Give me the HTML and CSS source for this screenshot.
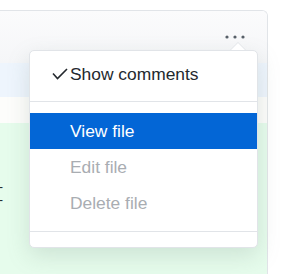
FILE: index.html
```html
<!DOCTYPE html>
<html>
<head>
<meta charset="utf-8">
<link rel="stylesheet" href="styles.css">
</head>
<body>
<div class="page">
  <div class="card">
    <div class="card-header">
      <button class="more" aria-label="More options">
        <svg width="20" height="4" viewBox="0 0 20 4"><circle cx="2" cy="2" r="1.6"/><circle cx="10" cy="2" r="1.6"/><circle cx="18" cy="2" r="1.6"/></svg>
      </button>
    </div>
    <div class="band band-blue"></div>
    <div class="band band-white"></div>
    <div class="band band-green">
      <div class="code">
        <div class="code-line"><span class="cut">-</span></div>
        <div class="code-line"><span class="cut">-</span></div>
      </div>
    </div>
  </div>
  <div class="menu">
    <div class="item item-checked">
      <svg class="check" width="16" height="12" viewBox="0 0 16 12"><polyline points="1,5.5 5.5,10.5 15,1" /></svg>
      <span>Show comments</span>
    </div>
    <div class="divider divider-top"></div>
    <div class="item item-active">View file</div>
    <div class="item item-disabled">Edit file</div>
    <div class="item item-disabled">Delete file</div>
    <div class="divider divider-bottom"></div>
  </div>
</div>
</body>
</html>
```
FILE: styles.css
```css
html, body {
  margin: 0;
  padding: 0;
  background: #ffffff;
}
body {
  font-family: "Liberation Sans", Arial, sans-serif;
  width: 298px;
  height: 274px;
  overflow: hidden;
}
.page {
  position: relative;
  padding-top: 10px;
}
.card {
  width: 268px;
  box-sizing: border-box;
  border-top: 1px solid #e1e4e8;
  border-right: 1px solid #e1e4e8;
  border-top-right-radius: 6px;
  overflow: hidden;
  background: #fff;
}
.card-header {
  height: 52px;
  background: linear-gradient(#fbfbfc, #f5f6f8);
  display: flex;
  justify-content: flex-end;
  align-items: flex-start;
  padding-top: 24px;
  padding-right: 22px;
  box-sizing: border-box;
}
.more {
  border: 0;
  padding: 0;
  margin: 0;
  background: transparent;
  display: flex;
  line-height: 0;
}
.more svg {
  fill: #586069;
}
.band-blue {
  height: 34px;
  background: #eef5fd;
}
.band-white {
  height: 26px;
  background: #fdfdfb;
}
.band-green {
  height: 160px;
  background: #e6fcec;
}
.code {
  padding-top: 58px;
  font-size: 12px;
  line-height: 13px;
  color: #24292e;
}
.code-line {
  height: 13px;
}
.cut {
  display: inline-block;
  margin-left: -1px;
}
.menu {
  position: absolute;
  top: 50px;
  left: 29px;
  width: 229px;
  box-sizing: border-box;
  background: #fff;
  border: 1px solid #e1e4e8;
  border-radius: 5px;
  box-shadow: 0 8px 22px rgba(120, 140, 130, 0.22);
  padding-top: 5px;
  padding-bottom: 15px;
}
.menu::before,
.menu::after {
  content: "";
  position: absolute;
  border-style: solid;
  border-color: transparent;
}
.menu::before {
  top: -17px;
  right: 11px;
  border-width: 8px;
  border-bottom-color: #e1e4e8;
}
.menu::after {
  top: -15px;
  right: 12px;
  border-width: 7px;
  border-bottom-color: #ffffff;
}
.item {
  height: 36px;
  line-height: 36px;
  font-size: 17.4px;
  padding-left: 40px;
  color: #24292e;
  white-space: nowrap;
}
.item-checked {
  display: flex;
  align-items: center;
  padding-left: 22px;
}
.check {
  width: 16px;
  height: 12px;
  margin-right: 2px;
  fill: none;
  stroke: #24292e;
  stroke-width: 1.6;
}
.item-active {
  background: #0366d6;
  color: #ffffff;
}
.item-disabled {
  color: #a9adb2;
}
.divider {
  height: 0;
  border-top: 1px solid #e1e4e8;
}
.divider-top {
  margin-top: 9px;
  margin-bottom: 11px;
}
.divider-bottom {
  margin-top: 10px;
}
```
